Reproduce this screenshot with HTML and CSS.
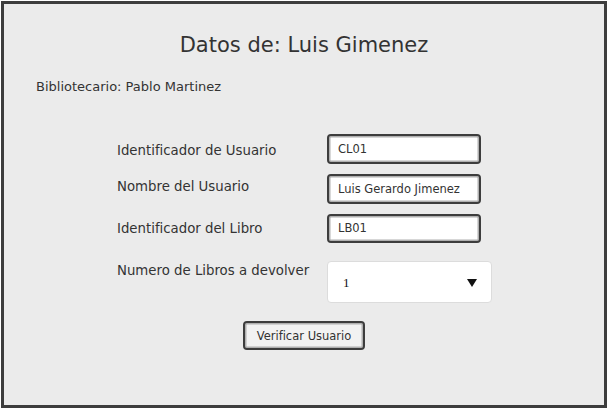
FILE: index.html
```html
<!DOCTYPE html>
<html lang="es">
<head>
<meta charset="utf-8">
<link rel="stylesheet" href="styles.css">
</head>
<body>
<div class="frame">
  <h1 class="title">Datos de: Luis Gimenez</h1>
  <p class="librarian">Bibliotecario: Pablo Martinez</p>
  <div class="form">
    <div class="label lower">Identificador de Usuario</div>
    <div class="field">CL01</div>
    <div class="label upper">Nombre del Usuario</div>
    <div class="field">Luis Gerardo Jimenez</div>
    <div class="label">Identificador del Libro</div>
    <div class="field short">LB01</div>
    <div class="label top">Numero de Libros a devolver</div>
    <div class="select"><span class="sel-val">1</span><span class="arrow"></span></div>
  </div>
  <div class="actions"><button class="btn">Verificar Usuario</button></div>
</div>
</body>
</html>
```
FILE: styles.css
```css
html, body { margin: 0; padding: 0; background: #fff; }
body { font-family: "DejaVu Sans", sans-serif; color: #333; }
.frame {
  margin: 1px 0 0 1px;
  width: 606px;
  height: 407px;
  box-sizing: border-box;
  border: 3px solid #3d3d3d;
  background: #ebebeb;
  padding-top: 28px;
}
.title {
  margin: 0;
  text-align: center;
  font-weight: normal;
  font-size: 21px;
  line-height: 26px;
  color: #333;
}
.librarian {
  margin: 21px 0 0 32px;
  font-size: 13px;
  line-height: 16px;
}
.form {
  margin: 39px 0 0 113px;
  display: grid;
  grid-template-columns: 210px 154px;
  row-gap: 10px;
  align-items: center;
}
.label { font-size: 13.3px; line-height: 16px; }
.label.lower { margin-top: 4px; }
.label.upper { margin-bottom: 4px; }
.label.top { align-self: start; margin-top: 10px; }
.field {
  height: 30px;
  box-sizing: border-box;
  border: 2px solid #3d3d3d;
  border-radius: 4px;
  box-shadow: inset 0 0 0 1.5px #b0b0b0;
  background: #fff;
  font-size: 11.5px;
  line-height: 26px;
  padding-left: 9px;
}
.field.short { height: 29px; line-height: 25px; }
.select {
  margin-top: 8px;
  width: 165px;
  height: 42px;
  box-sizing: border-box;
  background: #fff;
  border: 1px solid #dcdcdc;
  border-radius: 4px;
  display: flex;
  align-items: center;
  justify-content: space-between;
  padding: 2px 14px 0 15px;
}
.sel-val { font-family: "Liberation Serif", serif; font-size: 13px; color: #111; }
.arrow {
  width: 0; height: 0;
  border-left: 5px solid transparent;
  border-right: 5px solid transparent;
  border-top: 8px solid #111;
}
.actions { display: flex; justify-content: center; margin-top: 18px; }
.btn {
  width: 122px;
  height: 29px;
  box-sizing: border-box;
  border: 2px solid #3d3d3d;
  border-radius: 4px;
  box-shadow: inset 0 0 0 1.5px #b0b0b0;
  background: #f2f2f2;
  font-family: "DejaVu Sans", sans-serif;
  font-size: 11.5px;
  color: #333;
  padding: 0;
}
```
